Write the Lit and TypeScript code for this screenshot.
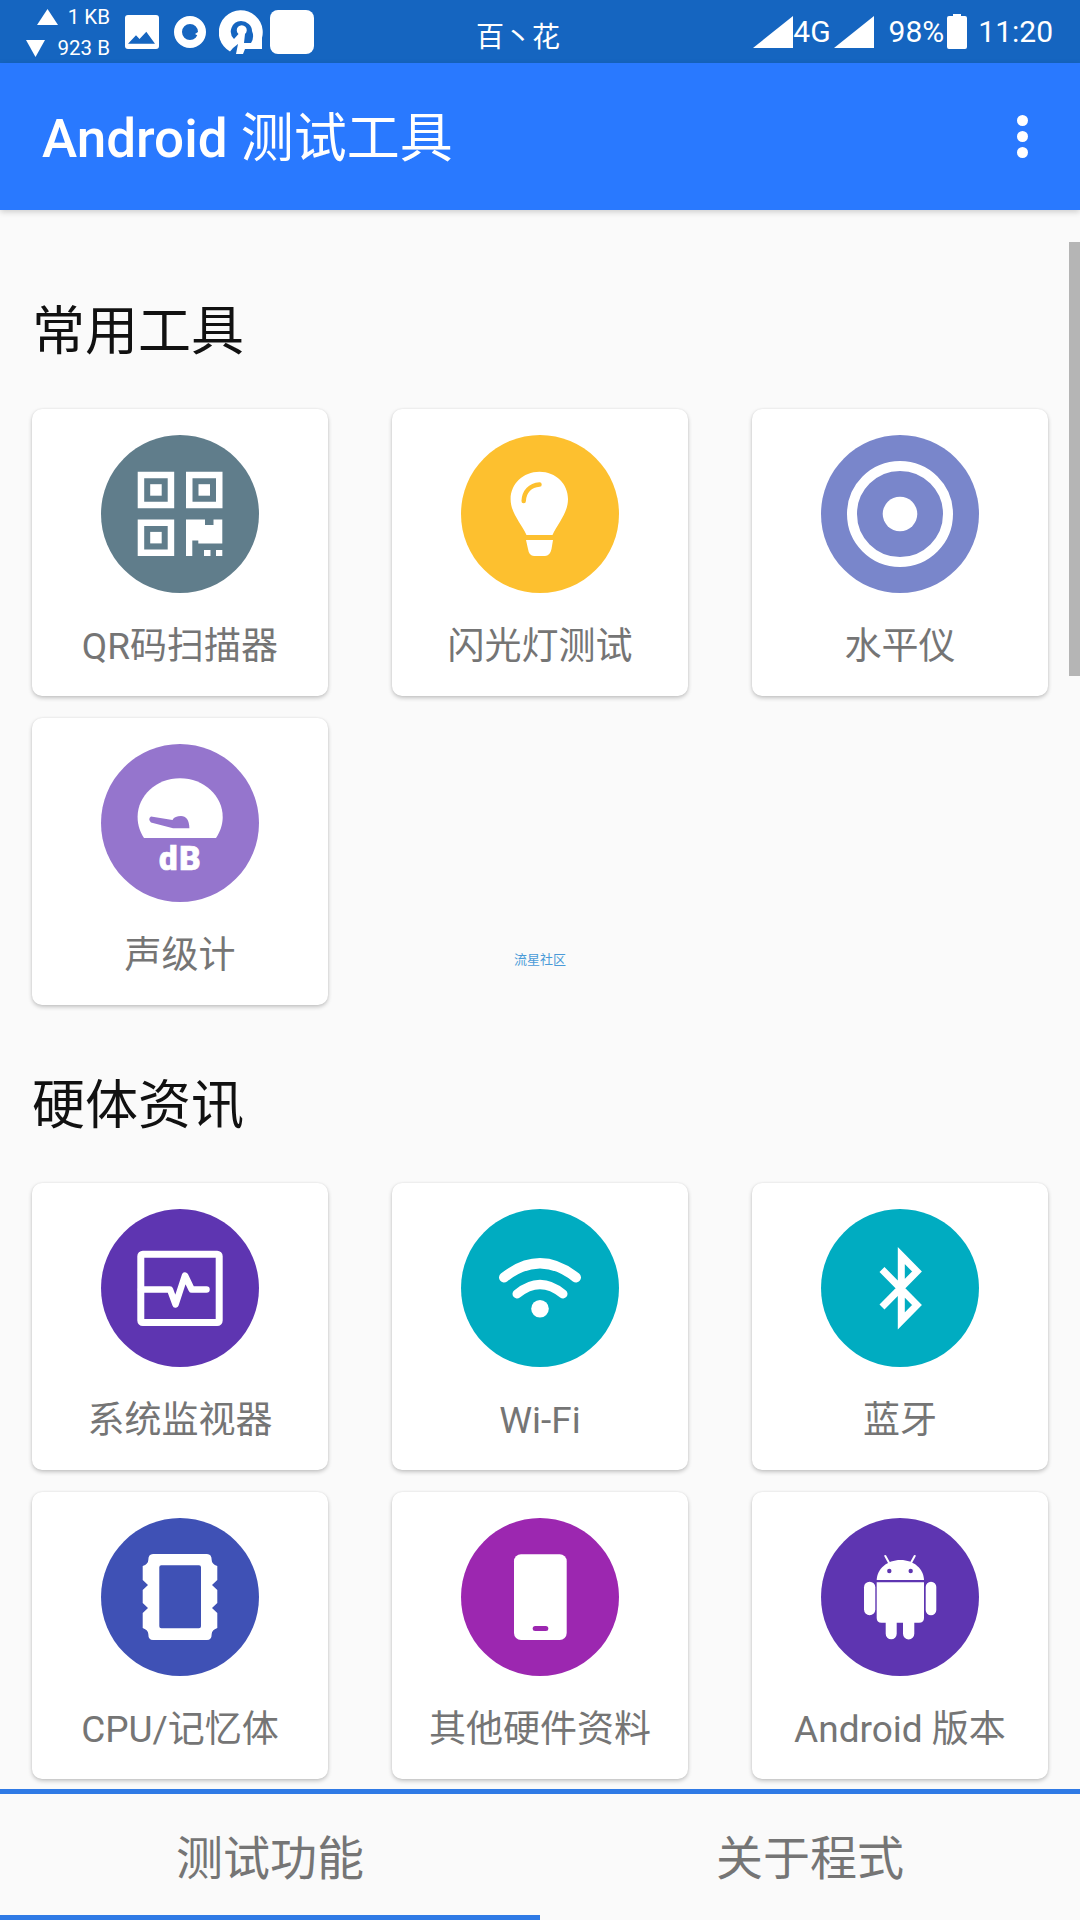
import { LitElement, css, html, svg } from "lit";
import { customElement } from "lit/decorators.js";

interface Tool {
  label: string;
  color: string;
  icon: unknown;
}

// All tool icons share a 158x158 box, the size of the coloured disc.
const qrFinder = (x: number, y: number) => svg`
  <path fill-rule="evenodd" d="M${x} ${y}h36.5v36.5h-36.5zM${x + 6.5} ${y + 6.5}v23.5h23.5v-23.5z" fill="#fff" />
  <rect x=${x + 12.5} y=${y + 12.5} width="11.5" height="11.5" fill="#fff" />
`;

const QR = svg`
  ${qrFinder(36.7, 36.7)}
  ${qrFinder(85, 36.7)}
  ${qrFinder(36.7, 84.4)}
  <path fill="#fff" d="M85 84.4h19v5.6h8.5v-5.6h8.8v24h-24v-3h-6v15.5h-6.3z" />
  <rect x="103" y="115" width="6.5" height="6" fill="#fff" />
  <rect x="115" y="115" width="6.3" height="6" fill="#fff" />
`;

const BULB = svg`
  <path fill="#fff" d="M78.5 36.7C62 36.7 49.6 49 49.6 64C49.6 78 60 88 65.5 100H91.5C97 88 107 78 107 64C107 49 95 36.7 78.5 36.7Z" />
  <path fill="#fff" d="M65 105H92L90.500 114Q89 121 84 121H73Q68 121 67 114Z" />
  <path fill="none" stroke="#fdc02f" stroke-width="4.500" stroke-linecap="round" d="M78.500 49.500C69 50 63 57 62.700 66" />
`;

const LEVEL = svg`
  <circle cx="79" cy="79" r="48" fill="none" stroke="#fff" stroke-width="10" />
  <circle cx="79" cy="79" r="17.3" fill="#fff" />
`;

const DB = svg`
  <path fill="#fff" d="M79 34.3C55 34.3 36.6 52 36.6 73C36.6 81 39 88 43 94H115C119 88 121.7 81 121.7 73C121.7 52 103 34.3 79 34.3Z" />
  <path fill="#9575cd" d="M50 72.5L71.5 76C73 73 76 72 80 72C85 72 88.4 76 88.4 84.3H72L50 78.5Q46.5 75 50 72.5Z" />
  <text class="db" x="79.5" y="125.5" text-anchor="middle">dB</text>
`;

const MONITOR = svg`
  <rect x="39.8" y="45.2" width="78.4" height="68.4" rx="2" fill="none" stroke="#fff" stroke-width="7" />
  <path fill="none" stroke="#fff" stroke-width="6.5" stroke-linecap="round" stroke-linejoin="round" d="M40 80.5H69L74.5 95.5L84 66.5L90.7 80.5H105.5" />
`;

const WIFI = svg`
  <path fill="none" stroke="#fff" stroke-width="10" stroke-linecap="round" d="M43 68.5Q79 40 115 68.5" />
  <path fill="none" stroke="#fff" stroke-width="9" stroke-linecap="round" d="M56 85Q79 66 102 85" />
  <circle cx="79" cy="99.7" r="8.8" fill="#fff" />
`;

const BLUETOOTH = svg`
  <path fill="none" stroke="#fff" stroke-width="7" stroke-miterlimit="6" d="M61 60.5L96 96L80.3 112V46.5L96 62.5L61 98" />
`;

const CPU = svg`
  <path fill="#fff" fill-rule="evenodd" d="M52 36H106Q110.7 36 110.7 42Q110.7 46 116.3 48V62L111 67L116.3 72V85L111 90L116.3 95V110Q110.7 112 110.7 116Q110.7 122 106 122H52Q47.3 122 47.3 116Q47.3 112 41.7 110V95L47 90L41.7 85V72L47 67L41.7 62V48Q47.3 46 47.3 42Q47.3 36 52 36ZM60.3 47.3Q58.3 47.3 58.3 49.3V108.3Q58.3 110.3 60.3 110.3H98Q100 110.3 100 108.3V49.3Q100 47.3 98 47.3Z" />
`;

const PHONE = svg`
  <rect x="53" y="36.3" width="52.7" height="85.7" rx="7" fill="#fff" />
  <rect x="71.7" y="108" width="15.6" height="5" rx="2.5" fill="#9c27b0" />
`;

const ANDROID = svg`
  <g fill="#fff">
    <path d="M55.7 62C56 51 66 42 79.5 42C93 42 102.7 51 103 62Z" />
    <path d="M55.7 64.3H103V100Q103 104.7 98 104.7H93.3V115.8A5.6 5.6 0 0 1 82 115.8V104.7H75.7V115.8A5.5 5.5 0 0 1 64.7 115.8V104.7H60.5Q55.7 104.7 55.7 100Z" />
    <rect x="43" y="63.7" width="11.3" height="33.5" rx="5.6" />
    <rect x="104.7" y="63.7" width="10.6" height="33.5" rx="5.3" />
  </g>
  <path stroke="#fff" stroke-width="2" stroke-linecap="round" d="M64.3 38L68.3 45.3M93.7 38L89.7 45.3" />
  <circle cx="68.3" cy="53" r="2.2" fill="#5e35b1" />
  <circle cx="89.7" cy="53" r="2.2" fill="#5e35b1" />
`;

const COMMON: Tool[] = [
  { label: "QR码扫描器", color: "#607d8b", icon: QR },
  { label: "闪光灯测试", color: "#fdc02f", icon: BULB },
  { label: "水平仪", color: "#7986cb", icon: LEVEL },
  { label: "声级计", color: "#9575cd", icon: DB },
];

const HARDWARE: Tool[] = [
  { label: "系统监视器", color: "#5e35b1", icon: MONITOR },
  { label: "Wi-Fi", color: "#00acc1", icon: WIFI },
  { label: "蓝牙", color: "#00acc1", icon: BLUETOOTH },
  { label: "CPU/记忆体", color: "#3f51b5", icon: CPU },
  { label: "其他硬件资料", color: "#9c27b0", icon: PHONE },
  { label: "Android 版本", color: "#5e35b1", icon: ANDROID },
];

@customElement("app-root")
export class AppRoot extends LitElement {
  static styles = css`
    :host {
      display: flex;
      flex-direction: column;
      width: 1080px;
      height: 1920px;
      overflow: hidden;
      position: relative;
      background: #fafafa;
      font-family: Roboto, "Noto Sans CJK SC", sans-serif;
    }
    svg {
      display: block;
      flex: none;
    }

    .status {
      flex: none;
      display: flex;
      align-items: center;
      height: 63px;
      padding: 0 27px 0 26px;
      box-sizing: border-box;
      background: #1565c0;
      color: #fff;
      font-size: 30px;
    }
    .net {
      width: 84px;
      font-size: 20.5px;
      line-height: 31px;
      margin-top: 2px;
      margin-right: 15px;
    }
    .net-row {
      display: flex;
      align-items: center;
      justify-content: space-between;
    }
    .net-row .up {
      margin-left: 11px;
    }
    .img-icon {
      margin-right: 15px;
    }
    .ring-icon {
      margin-right: 13px;
    }
    .vpn-icon {
      margin-right: 7px;
    }
    .blank-icon {
      width: 44px;
      height: 44px;
      border-radius: 8px;
      background: #fff;
    }
    .carrier {
      margin-left: 162px;
      margin-top: 7px;
      font-size: 28px;
      white-space: nowrap;
    }
    .status-right {
      margin-left: auto;
      display: flex;
      align-items: center;
    }
    .g4 {
      margin: 0 3px 0 0;
    }
    .pct {
      margin-left: 15px;
      margin-right: 3px;
    }
    .clock {
      margin-left: 11px;
    }

    .appbar {
      flex: none;
      display: flex;
      align-items: center;
      justify-content: space-between;
      height: 147px;
      padding: 0 52px 0 42px;
      box-sizing: border-box;
      background: #2979ff;
      color: #fff;
      box-shadow: 0 2px 6px rgba(0, 0, 0, 0.18);
      position: relative;
      z-index: 1;
    }
    .appbar h1 {
      margin: 0 0 6px;
      font-size: 53px;
      font-weight: 500;
      white-space: nowrap;
    }
    .appbar h1 span {
      font-weight: 400;
    }
    .dots {
      display: flex;
      flex-direction: column;
      gap: 5px;
    }
    .dots i {
      width: 11px;
      height: 11px;
      border-radius: 50%;
      background: #fff;
    }

    main {
      flex: 1;
      min-height: 0;
      overflow: hidden;
      padding: 0 32px;
      position: relative;
    }
    h2 {
      margin: 0 0 41px;
      height: 72px;
      line-height: 72px;
      font-size: 53px;
      font-weight: 400;
      color: #111;
    }
    .first {
      margin-top: 86px;
    }
    .next {
      margin-top: 65px;
    }
    .grid {
      display: grid;
      grid-template-columns: repeat(3, 296px);
      grid-auto-rows: 287px;
      column-gap: 64px;
      row-gap: 22px;
    }
    .card {
      display: flex;
      flex-direction: column;
      align-items: center;
      padding-top: 26px;
      box-sizing: border-box;
      background: #fff;
      border-radius: 10px;
      box-shadow: 0 2px 4px rgba(0, 0, 0, 0.22), 0 0 2px rgba(0, 0, 0, 0.08);
    }
    .disc {
      width: 158px;
      height: 158px;
      border-radius: 50%;
    }
    .label {
      margin-top: 29px;
      font-size: 37px;
      line-height: 50px;
      color: #757575;
      white-space: nowrap;
    }
    .db {
      font-family: Roboto, sans-serif;
      font-weight: 900;
      font-size: 33px;
      letter-spacing: 1.5px;
      fill: #fff;
      stroke: #fff;
      stroke-width: 0.7px;
    }
    .mark {
      align-self: end;
      justify-self: center;
      margin-bottom: 36px;
      font-size: 13px;
      line-height: 18px;
      color: #4a9ad8;
    }
    .scrollbar {
      position: absolute;
      top: 32px;
      right: 0;
      width: 11px;
      height: 434px;
      background: #b5b5b5;
    }

    .tabs {
      flex: none;
      display: flex;
      height: 131px;
      box-sizing: border-box;
      border-top: 5px solid #2f7ae5;
      background: #fafafa;
    }
    .tab {
      flex: 1;
      display: flex;
      align-items: center;
      justify-content: center;
      box-sizing: border-box;
      border-bottom: 5px solid transparent;
      font-size: 47px;
      color: #757575;
    }
    .tab.active {
      border-bottom-color: #2f7ae5;
    }
  `;

  private _signal() {
    return html`<svg width="40" height="32" viewBox="0 0 40 32"><path d="M0 32L40 0V32Z" fill="#fff" /></svg>`;
  }

  private _card(t: Tool) {
    return html`<div class="card">
      <svg class="disc" style="background:${t.color}" viewBox="0 0 158 158" width="158" height="158">${t.icon}</svg>
      <div class="label">${t.label}</div>
    </div>`;
  }

  render() {
    return html`
      <header class="status">
        <div class="net">
          <div class="net-row">
            <svg class="up" width="21" height="16" viewBox="0 0 21 16"><path d="M10.5 0L21 16H0Z" fill="#fff" /></svg>
            <span>1 KB</span>
          </div>
          <div class="net-row">
            <svg width="19" height="17" viewBox="0 0 19 17"><path d="M0 0H19L9.5 17Z" fill="#fff" /></svg>
            <span>923 B</span>
          </div>
        </div>
        <svg class="img-icon" width="34" height="34" viewBox="0 0 34 34">
          <rect width="34" height="34" rx="3" fill="#fff" />
          <path d="M3 28.7L11 20.3L14.5 24L21.3 16.7L30 28.7Z" fill="#1565c0" />
        </svg>
        <svg class="ring-icon" width="32" height="32" viewBox="0 0 32 32">
          <circle cx="16" cy="16" r="12" fill="none" stroke="#fff" stroke-width="8" />
          <path d="M21 18L27 14L26 21Z" fill="#fff" />
        </svg>
        <svg class="vpn-icon" width="44" height="44" viewBox="0 0 44 44">
          <path fill="#fff" fill-rule="evenodd" d="M11 41.500A22 22 0 1 1 43 28V39H26L24 44H17L19 34L14 38ZM22 11A10.500 10.500 0 0 0 15 29L19.500 24A5 5 0 1 1 26 24L25 33H32A13 13 0 0 0 33 21A11 10 0 0 0 22 11Z" />
        </svg>
        <div class="blank-icon"></div>
        <div class="carrier">百丶花</div>
        <div class="status-right">
          ${this._signal()}
          <span class="g4">4G</span>
          ${this._signal()}
          <span class="pct">98%</span>
          <svg width="20" height="35" viewBox="0 0 20 35">
            <path d="M6 0H14V2H18Q20 2 20 4V33Q20 35 18 35H2Q0 35 0 33V4Q0 2 2 2H6Z" fill="#fff" />
          </svg>
          <span class="clock">11:20</span>
        </div>
      </header>

      <div class="appbar">
        <h1>Android <span>测试工具</span></h1>
        <div class="dots"><i></i><i></i><i></i></div>
      </div>

      <main>
        <h2 class="first">常用工具</h2>
        <div class="grid">
          ${COMMON.map((t) => this._card(t))}
          <div class="mark">流星社区</div>
        </div>
        <h2 class="next">硬体资讯</h2>
        <div class="grid">${HARDWARE.map((t) => this._card(t))}</div>
        <div class="scrollbar"></div>
      </main>

      <nav class="tabs">
        <div class="tab active">测试功能</div>
        <div class="tab">关于程式</div>
      </nav>
    `;
  }
}
